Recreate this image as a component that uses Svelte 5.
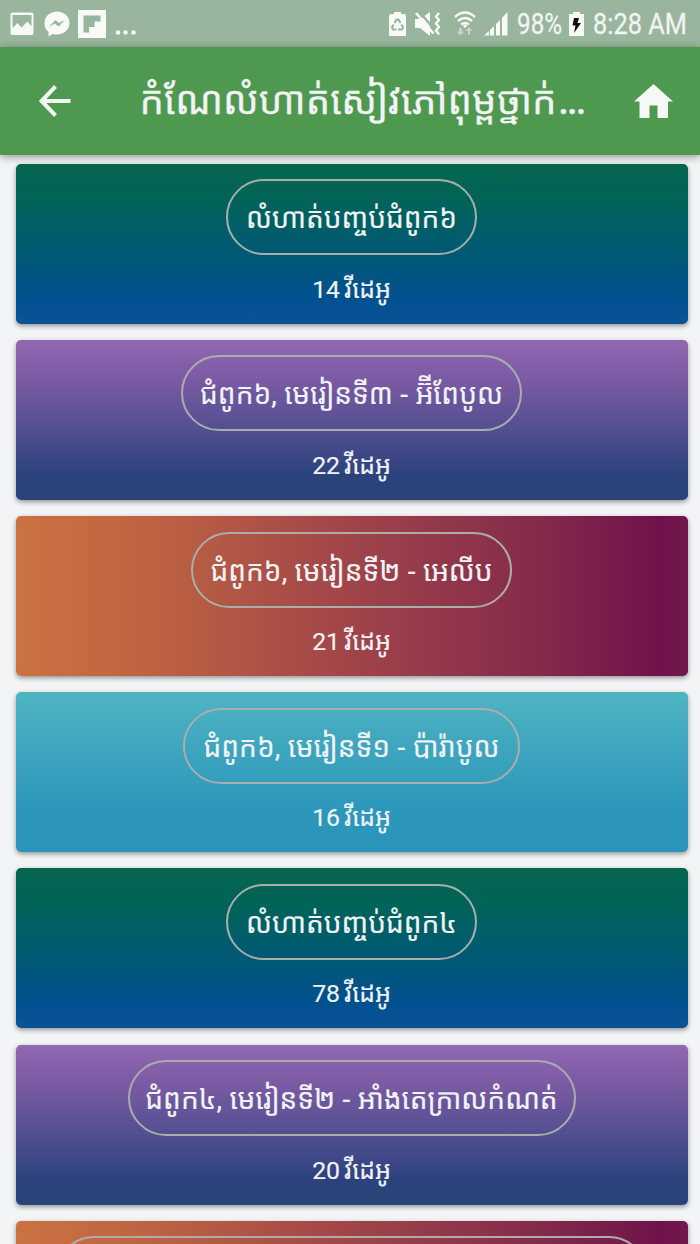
<script lang="ts">
	type Course = { title?: string; videos?: number; theme: string; width: number };

	const courses: Course[] = [
		{ title: 'លំហាត់បញ្ចប់ជំពូក៦', videos: 14, theme: 'ocean', width: 251 },
		// the zero-width non-joiner keeps the register shifter above the vowel
		{ title: 'ជំពូក៦, មេរៀនទី៣ - អ\u200c៊ីពែបូល', videos: 22, theme: 'violet', width: 341 },
		{ title: 'ជំពូក៦, មេរៀនទី២ - អេលីប', videos: 21, theme: 'sunset', width: 321 },
		{ title: 'ជំពូក៦, មេរៀនទី១ - ប៉ារ៉ាបូល', videos: 16, theme: 'aqua', width: 337 },
		{ title: 'លំហាត់បញ្ចប់ជំពូក៤', videos: 78, theme: 'ocean', width: 251 },
		{ title: 'ជំពូក៤, មេរៀនទី២ - អាំងតេក្រាលកំណត់', videos: 20, theme: 'violet', width: 448 },
		{ theme: 'sunset', width: 591 }
	];
</script>

<div class="screen">
	<div class="status-bar">
		<div class="notifications">
			<svg width="24" height="24" viewBox="0 0 24 24">
				<path
					fill-rule="evenodd"
					d="M2.500 0.500h19a2 2 0 0 1 2 2v18.500a2 2 0 0 1-2 2h-19a2 2 0 0 1-2-2v-18.500a2 2 0 0 1 2-2zM2.500 3v13l5-5 4 4.500 6-6 4 5v-11.500z"
				/>
			</svg>
			<svg class="messenger" width="26" height="26" viewBox="0 0 26 26">
				<path
					fill-rule="evenodd"
					d="M13 0.500C6 0.500.500 5.500.500 12c0 4 1.500 7 4 9v4.500l4.500-2.500c1 .5 2.500.5 4 .5 7 0 12.500-5 12.500-11.500S20 .5 13 .5zM5 15.500l6.500-6.500 3.500 3L21 9l-6.500 6.500-3.500-3z"
				/>
			</svg>
			<svg class="flipboard" width="28" height="28" viewBox="0 0 28 28">
				<path fill-rule="evenodd" d="M0 0h28v28H0zM5.500 5.500v17h5.500v-5.500h5.500v-5.500H22.500v-6z" />
			</svg>
			<svg class="more" width="22" height="28" viewBox="0 0 22 28">
				<circle cx="3" cy="22.500" r="2.200" />
				<circle cx="10.500" cy="22.500" r="2.200" />
				<circle cx="18.500" cy="22.500" r="2.200" />
			</svg>
		</div>
		<div class="system">
			<svg width="17" height="24" viewBox="0 0 17 24">
				<path d="M5 0h7v2h3a2 2 0 0 1 2 2v20H0V4a2 2 0 0 1 2-2h3z" />
				<path
					class="cut"
					d="M5.500 11l2-3.500h2l2 3.500M12.500 12.500l1.500 3-1 2h-4M7.500 17.500H4l-1-2 1.500-3"
				/>
			</svg>
			<svg class="mute" width="26" height="24" viewBox="0 0 26 24">
				<path d="M0 7h5l10-7v24L5 16H0z" />
				<path class="gap" d="M3.500 -1l17 19.500" />
				<path class="slash" d="M1 1l17.500 20.500" />
				<path class="wave" d="M24 1l-3 3.500 3 3.500-3 3.500 3 3.500-3 3.500 3 4" />
			</svg>
			<svg class="wifi" width="22" height="25" viewBox="0 0 22 25">
				<path class="arc" d="M1 6q10-9 20 0M4 10q7-6 14 0M7 13.500q4-3 8 0" />
				<circle cx="11" cy="15" r="1.800" />
				<path class="traffic" d="M5 17v3.500H2.500l4 4 4-4H8V17zM14 24v-4h-3l4-4 4 4h-3v4z" />
			</svg>
			<svg class="signal" width="24" height="24" viewBox="0 0 24 24">
				<path d="M0 23.500L5 19v4.500zM6 18l4-4v9.500H6zM12 12l4-4v15.500h-4zM18 6l5.500-6v23.500H18z" />
			</svg>
			<span class="percent">98%</span>
			<svg class="charging" width="15" height="24" viewBox="0 0 15 24">
				<path d="M4 0h7v2h4v22H0V2h4z" />
				<path class="bolt" d="M5 6h5l-1.500 5H12l-7 10 1.500-7.500H3.500z" />
			</svg>
			<span class="clock">8:28 AM</span>
		</div>
	</div>

	<header>
		<svg class="back" width="32" height="32" viewBox="0 0 32 32">
			<path d="M31.500 16H3M16.500 1.500L2.500 16l14 14.500" />
		</svg>
		<h1>កំណែលំហាត់សៀវភៅពុម្ពថ្នាក់<span>...</span></h1>
		<svg class="home" width="40" height="34" viewBox="0 0 40 34">
			<path d="M19.500 0L39 17.500h-5V34H23.500V21.500h-8V34H5.500V17.500H0z" />
		</svg>
	</header>

	<main>
		{#each courses as course}
			<section class="card {course.theme}">
				<div class="pill" style:width="{course.width}px">{course.title ?? ''}</div>
				{#if course.videos}
					<p>{course.videos} វីដេអូ</p>
				{/if}
			</section>
		{/each}
	</main>
</div>

<style>
	:global(body) {
		margin: 0;
	}
	.screen {
		width: 700px;
		height: 1244px;
		overflow: hidden;
		display: flex;
		flex-direction: column;
		background: #f3f4f6;
		color: #f1f3f5;
		font-family: Roboto, 'Noto Sans Khmer', 'Noto Sans', sans-serif;
	}
	.status-bar {
		height: 47px;
		flex-shrink: 0;
		box-sizing: border-box;
		padding: 0 13px 0 10px;
		display: flex;
		justify-content: space-between;
		align-items: center;
		background: #99b59d;
		fill: #f7faf7;
	}
	.notifications,
	.system {
		display: flex;
		align-items: center;
	}
	.messenger {
		margin-left: 10px;
	}
	.flipboard {
		margin-left: 8px;
	}
	.more {
		margin-left: 9px;
	}
	.cut {
		fill: none;
		stroke: #99b59d;
		stroke-width: 2;
	}
	.mute {
		margin-left: 9px;
	}
	.gap {
		stroke: #99b59d;
		stroke-width: 2.5;
	}
	.slash {
		stroke: #f7faf7;
		stroke-width: 2.5;
	}
	.wave,
	.arc {
		fill: none;
		stroke: #f7faf7;
		stroke-width: 2.4;
		stroke-linejoin: round;
	}
	.wifi {
		margin-left: 13px;
	}
	.traffic {
		fill: #c5d4c7;
	}
	.signal {
		margin-left: 8px;
	}
	.percent,
	.clock {
		font-size: 30px;
		line-height: 48px;
		white-space: nowrap;
		display: block;
		transform-origin: left;
		-webkit-text-stroke: 0.3px;
	}
	.percent {
		width: 46px;
		margin-left: 9px;
		transform: scaleX(0.81);
	}
	.charging {
		margin-left: 6px;
	}
	.bolt {
		fill: #111;
	}
	.clock {
		width: 94px;
		margin-left: 9px;
		transform: scaleX(0.845);
	}
	header {
		height: 108px;
		flex-shrink: 0;
		box-sizing: border-box;
		padding: 0 26px 0 38.500px;
		display: flex;
		align-items: center;
		background: #4e984f;
		box-shadow: 0 2px 8px rgba(0, 0, 0, 0.4);
		z-index: 1;
	}
	.back path {
		fill: none;
		stroke: #f1f6f1;
		stroke-width: 4;
	}
	.home {
		margin-left: auto;
		fill: #f5f9f5;
	}
	h1 {
		margin: 1px 0 0 69px;
		font-size: 38.600px;
		font-weight: 400;
		line-height: 70px;
		white-space: nowrap;
		-webkit-text-stroke: 0.3px;
	}
	h1 span {
		font-weight: 700;
		font-size: 33px;
		letter-spacing: -0.800px;
		margin-left: 2px;
	}
	main {
		padding: 8.700px 12px 0 16px;
		display: flex;
		flex-direction: column;
		gap: 16.200px;
	}
	.card {
		height: 160px;
		flex-shrink: 0;
		box-sizing: border-box;
		padding: 15.500px 1px 0 0;
		border-radius: 5px;
		display: flex;
		flex-direction: column;
		align-items: center;
		box-shadow: 0 2px 5px rgba(0, 0, 0, 0.4);
	}
	.ocean {
		background: linear-gradient(#066650, #01635a 25%, #01557f 68%, #015090 85%, #0c5296);
	}
	.violet {
		background: linear-gradient(#9168b2, #7f5ca6 20%, #544f91 55%, #2b427c 85%, #2a4477);
	}
	.sunset {
		background: linear-gradient(90deg, #cb7241, #bd6342 20%, #a0444a 50%, #842a4b 78%, #6f124b 96%, #72194c);
	}
	.aqua {
		background: linear-gradient(#50b4c2, #42a9bf 25%, #2c97bb 75%, #2b94bb);
	}
	.pill {
		height: 76px;
		box-sizing: border-box;
		border: 2px solid #a9aeab;
		border-radius: 38px;
		font-size: 28px;
		line-height: 75px;
		text-align: center;
		white-space: nowrap;
		word-spacing: 0.500px;
		-webkit-text-stroke: 0.15px;
	}
	p {
		margin: 14.500px 0 0;
		font-size: 24.800px;
		line-height: 40px;
		white-space: nowrap;
		word-spacing: -2px;
		-webkit-text-stroke: 0.15px;
	}
</style>
